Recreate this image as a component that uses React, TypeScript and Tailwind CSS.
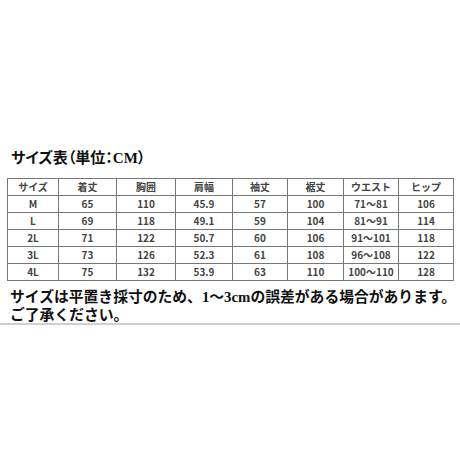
import React from "react";

const header = ["サイズ", "着丈", "胸囲", "肩幅", "袖丈", "裾丈", "ウエスト", "ヒップ"];
const rows = [
  ["M", "65", "110", "45.9", "57", "100", "71～81", "106"],
  ["L", "69", "118", "49.1", "59", "104", "81～91", "114"],
  ["2L", "71", "122", "50.7", "60", "106", "91～101", "118"],
  ["3L", "73", "126", "52.3", "61", "108", "96～108", "122"],
  ["4L", "75", "132", "53.9", "63", "110", "100～110", "128"],
];
const widths = [51, 58, 59, 57, 55, 56, 55, 55];

export default function App() {
  return (
    <div className="w-[460px] h-[460px] bg-white overflow-hidden flex flex-col">
      <div className="pt-[148px] pl-[11px] h-[168px] text-[15px] leading-[20px] font-bold text-[#111] [font-family:'Liberation_Serif','Noto_Sans_CJK_JP',serif] [font-feature-settings:'palt']">
        サイズ表（単位：CM）
      </div>
      <div className="pt-[10px] pl-[7px]">
        <table className="border-collapse table-fixed w-[446px] [font-family:'Noto_Sans_CJK_JP',sans-serif] text-[10px] font-bold text-[#444]">
          <colgroup>
            {widths.map((w, i) => (
              <col key={i} style={{ width: w }} />
            ))}
          </colgroup>
          <tbody>
            <tr>
              {header.map((h, i) => (
                <td key={i} className="border border-[#777] h-[16px] p-0 text-center leading-[16px]">
                  {h}
                </td>
              ))}
            </tr>
            {rows.map((r, ri) => (
              <tr key={ri}>
                {r.map((c, i) => (
                  <td key={i} className="border border-[#777] h-[16px] p-0 text-center leading-[16px]">
                    {c}
                  </td>
                ))}
              </tr>
            ))}
          </tbody>
        </table>
      </div>
      <div className="pt-[7px] pl-[10px] text-[14.8px] font-bold text-[#111] [font-family:'Liberation_Serif','Noto_Sans_CJK_JP',serif]">
        <div className="leading-[19px] whitespace-nowrap">サイズは平置き採寸のため、1～3cmの誤差がある場合があります。</div>
        <div className="leading-[16px]">ご了承ください。</div>
      </div>
      <div className="h-[2px] bg-[#d0d0d0] w-full" />
    </div>
  );
}
